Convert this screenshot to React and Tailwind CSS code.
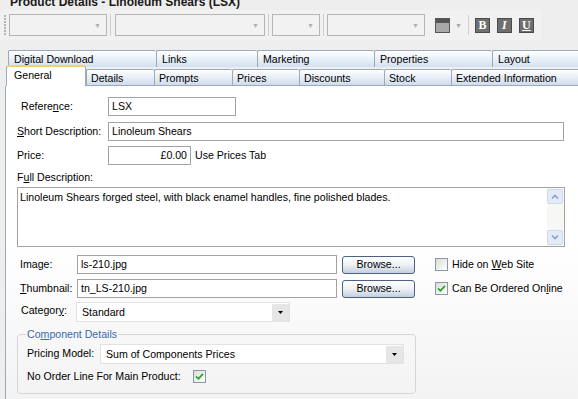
import React from "react";

const font = "font-['Liberation_Sans',Arial,sans-serif]";

function Combo({ w }) {
    return (
        <div
            className={`h-[22px] border border-[#b5b5b5] bg-[#f2f2f2] flex items-center justify-end pr-[5px] ${w}`}
        >
            <span className="text-[7px] text-[#b0b0b0] leading-none">▼</span>
        </div>
    );
}

function Sep() {
    return <div className="w-[1px] h-[22px] bg-[#cfcfcf] mx-[3px]" />;
}

function FmtButton({ label, italic }) {
    return (
        <div className="w-[15px] h-[15px] bg-[#6f6f6f] border border-[#4a4a4a] flex items-center justify-center">
            <span
                className={`font-['Liberation_Serif',serif] font-bold text-[12px] leading-none text-white ${
                    italic ? "italic" : ""
                } ${label === "U" ? "underline" : ""}`}
            >
                {label}
            </span>
        </div>
    );
}

function Tab({ label, w, active }) {
    if (active) {
        return (
            <div
                className={`relative z-10 h-[21px] ${w} shrink-0 border-l border-r border-[#9aa9bb] border-t-[2px] border-t-[#f4cf63] rounded-t-[3px] bg-white pl-[7px] pt-[1px] leading-[14px]`}
            >
                {label}
            </div>
        );
    }
    return (
        <div
            className={`h-[17px] ${w} border-l border-t border-b border-[#9aa9bb] rounded-t-[2px] bg-linear-to-b from-white to-[#cfdcee] pl-[4px] leading-[16px] shrink-0`}
        >
            {label}
        </div>
    );
}

function BackTab({ label, w }) {
    return (
        <div
            className={`h-[17px] ${w} border-l border-t border-[#9aa9bb] rounded-t-[2px] bg-linear-to-b from-white to-[#d3e0f1] pl-[5px] leading-[16px] shrink-0`}
        >
            {label}
        </div>
    );
}

function Check({ checked }) {
    return (
        <span className="w-[13px] h-[13px] shrink-0 border border-[#8797ac] bg-linear-to-br from-[#dcdcd6] to-white flex items-center justify-center">
            {checked && (
                <svg viewBox="0 0 9 9" className="w-[9px] h-[9px]">
                    <path
                        d="M1 4.3 L3.4 6.8 L8 1.8"
                        stroke="#28a428"
                        strokeWidth="1.7"
                        fill="none"
                    />
                </svg>
            )}
        </span>
    );
}

function Input({ value, w, right }) {
    return (
        <div
            className={`h-[19px] ${w} border border-[#a2a2a2] bg-white flex items-center px-[3px] ${
                right ? "justify-end" : ""
            }`}
        >
            {value}
        </div>
    );
}

function Select({ value, w }) {
    return (
        <div
            className={`h-[20px] ${w} border border-[#e2e2e2] bg-white flex items-center pl-[5px] pt-[2px]`}
        >
            <span className="flex-1">{value}</span>
            <span className="w-[17px] h-[17px] -mt-[2px] bg-[#e6e6e6] flex items-center justify-center">
                <svg viewBox="0 0 5 3" className="w-[5px] h-[3px]">
                    <path d="M0 0 H5 L2.5 3 Z" fill="#000" />
                </svg>
            </span>
        </div>
    );
}

function Browse() {
    return (
        <div className="w-[73px] h-[18px] rounded-[3px] border border-[#4d6282] bg-linear-to-b from-[#fefefe] via-[#eef1f5] to-[#c4cfdd] flex items-center justify-center">
            Browse...
        </div>
    );
}

function Arrow({ up }) {
    return (
        <div className="w-[16px] h-[15px] rounded-[2px] bg-[#e3ebf8] border border-[#cdd9ec] flex items-center justify-center">
            <svg viewBox="0 0 8 5" className="w-[8px] h-[5px]">
                <path
                    d={up ? "M1 4.5 L4 1.5 L7 4.5" : "M1 0.5 L4 3.5 L7 0.5"}
                    stroke="#8aa2c8"
                    strokeWidth="1.6"
                    fill="none"
                />
            </svg>
        </div>
    );
}

export default function App() {
    return (
        <div
            className={`w-[578px] h-[399px] overflow-hidden bg-[#eeeeee] text-[10.6px] text-black ${font}`}
        >
            {/* title, clipped at the top */}
            <div className="h-[10px] overflow-hidden">
                <div className="-mt-[4px] pl-[10px] leading-[12px] text-[12px] font-bold text-[#1a1a1a]">
                    Product Details - Linoleum Shears (LSX)
                </div>
            </div>

            {/* toolbar */}
            <div className="h-[30px] w-[541px] flex items-center bg-[#f1f1f1]">
                <div className="w-[9px] h-[22px] flex flex-col justify-between items-center py-[1px]">
                    {[0, 1, 2, 3, 4, 5, 6].map((i) => (
                        <span key={i} className="w-[2px] h-[2px] bg-[#b4b4b4]" />
                    ))}
                </div>
                <Combo w="w-[98px]" />
                <Sep />
                <div className="w-[1px]" />
                <Combo w="w-[150px]" />
                <Sep />
                <Combo w="w-[48px]" />
                <Sep />
                <Combo w="w-[98px]" />
                <div className="w-[10px]" />
                <div className="w-[15px] h-[15px] border border-[#555] flex flex-col">
                    <div className="h-[4px] bg-[#555]" />
                    <div className="flex-1 bg-[#a8a8a8]" />
                </div>
                <span className="ml-[5px] text-[7px] text-[#a8a8a8] leading-none">▼</span>
                <div className="w-[1px] h-[20px] bg-[#cfcfcf] ml-[6px] mr-[6px]" />
                <div className="flex gap-[7px]">
                    <FmtButton label="B" />
                    <FmtButton label="I" italic />
                    <FmtButton label="U" />
                </div>
            </div>

            <div className="h-[10px]" />

            {/* tabs */}
            <div className="pl-[5px]">
                <div className="flex h-[17px] pl-[3px]">
                    <BackTab label="Digital Download" w="w-[148px]" />
                    <BackTab label="Links" w="w-[101px]" />
                    <BackTab label="Marketing" w="w-[117px]" />
                    <BackTab label="Properties" w="w-[118px]" />
                    <BackTab label="Layout" w="w-[100px]" />
                </div>
                <div className="flex h-[19px] pl-[1px] items-end">
                    <Tab label="General" w="w-[80px]" active />
                    <Tab label="Details" w="w-[68px]" />
                    <Tab label="Prompts" w="w-[78px]" />
                    <Tab label="Prices" w="w-[67px]" />
                    <Tab label="Discounts" w="w-[85px]" />
                    <Tab label="Stock" w="w-[67px]" />
                    <Tab label="Extended Information" w="w-[140px]" />
                </div>

                {/* panel */}
                <div className="h-[313px] border-l border-[#9aa9bb] bg-linear-to-b from-white via-white to-[#f3f3f3] pl-[11px] pt-[11px] flex flex-col">
                    <div className="flex items-center">
                        <span className="w-[91px] pl-[4px]">
                            Refere<u>n</u>ce:
                        </span>
                        <Input value="LSX" w="w-[128px]" />
                    </div>
                    <div className="flex items-center mt-[6px]">
                        <span className="w-[91px]">
                            <u>S</u>hort Description:
                        </span>
                        <Input value="Linoleum Shears" w="w-[456px]" />
                    </div>
                    <div className="flex items-center mt-[5px]">
                        <span className="w-[91px]">Price:</span>
                        <Input value="£0.00" w="w-[83px]" right />
                        <span className="ml-[4px]">Use Prices Tab</span>
                    </div>
                    <div className="mt-[5px] h-[14px] leading-[14px]">
                        F<u>u</u>ll Description:
                    </div>
                    <div className="mt-[3px] w-[548px] h-[60px] border border-[#a2a2a2] bg-white flex">
                        <div className="flex-1 pl-[2px] pt-[2px]">
                            Linoleum Shears forged steel, with black enamel handles, fine polished blades.
                        </div>
                        <div className="w-[17px] bg-[#f7f7f4] flex flex-col justify-between py-[1px]">
                            <Arrow up />
                            <Arrow />
                        </div>
                    </div>

                    <div className="flex items-center mt-[8px]">
                        <span className="w-[60px] pl-[3px]">Image:</span>
                        <Input value="ls-210.jpg" w="w-[260px]" />
                        <div className="ml-[5px]">
                            <Browse />
                        </div>
                        <div className="ml-[20px] flex items-center gap-[4px]">
                            <Check />
                            <span>
                                Hide on <u>W</u>eb Site
                            </span>
                        </div>
                    </div>
                    <div className="flex items-center mt-[5px]">
                        <span className="w-[60px] pl-[3px]">
                            <u>T</u>humbnail:
                        </span>
                        <Input value="tn_LS-210.jpg" w="w-[260px]" />
                        <div className="ml-[5px]">
                            <Browse />
                        </div>
                        <div className="ml-[20px] flex items-center gap-[4px]">
                            <Check checked />
                            <span>
                                Can Be Ordered On<u>l</u>ine
                            </span>
                        </div>
                    </div>
                    <div className="flex items-center mt-[4px]">
                        <span className="w-[59px] pl-[4px] -mt-[3px]">
                            Categor<u>y</u>:
                        </span>
                        <Select value="Standard" w="w-[214px]" />
                    </div>

                    <fieldset className="mt-[6px] w-[399px] h-[66px] border border-[#d6d6d6] rounded-[4px] pl-[9px]">
                        <legend className="-ml-[1px] px-[1px] text-[#3868b2] leading-[13px]">
                            Co<u>m</u>ponent Details
                        </legend>
                        <div className="flex items-center mt-[3px]">
                            <span className="w-[73px]">Pricing Model:</span>
                            <Select value="Sum of Components Prices" w="w-[304px]" />
                        </div>
                        <div className="flex items-center mt-[5px]">
                            <span className="w-[166px]">No Order Line For Main Product:</span>
                            <Check checked />
                        </div>
                    </fieldset>
                </div>
            </div>
        </div>
    );
}
